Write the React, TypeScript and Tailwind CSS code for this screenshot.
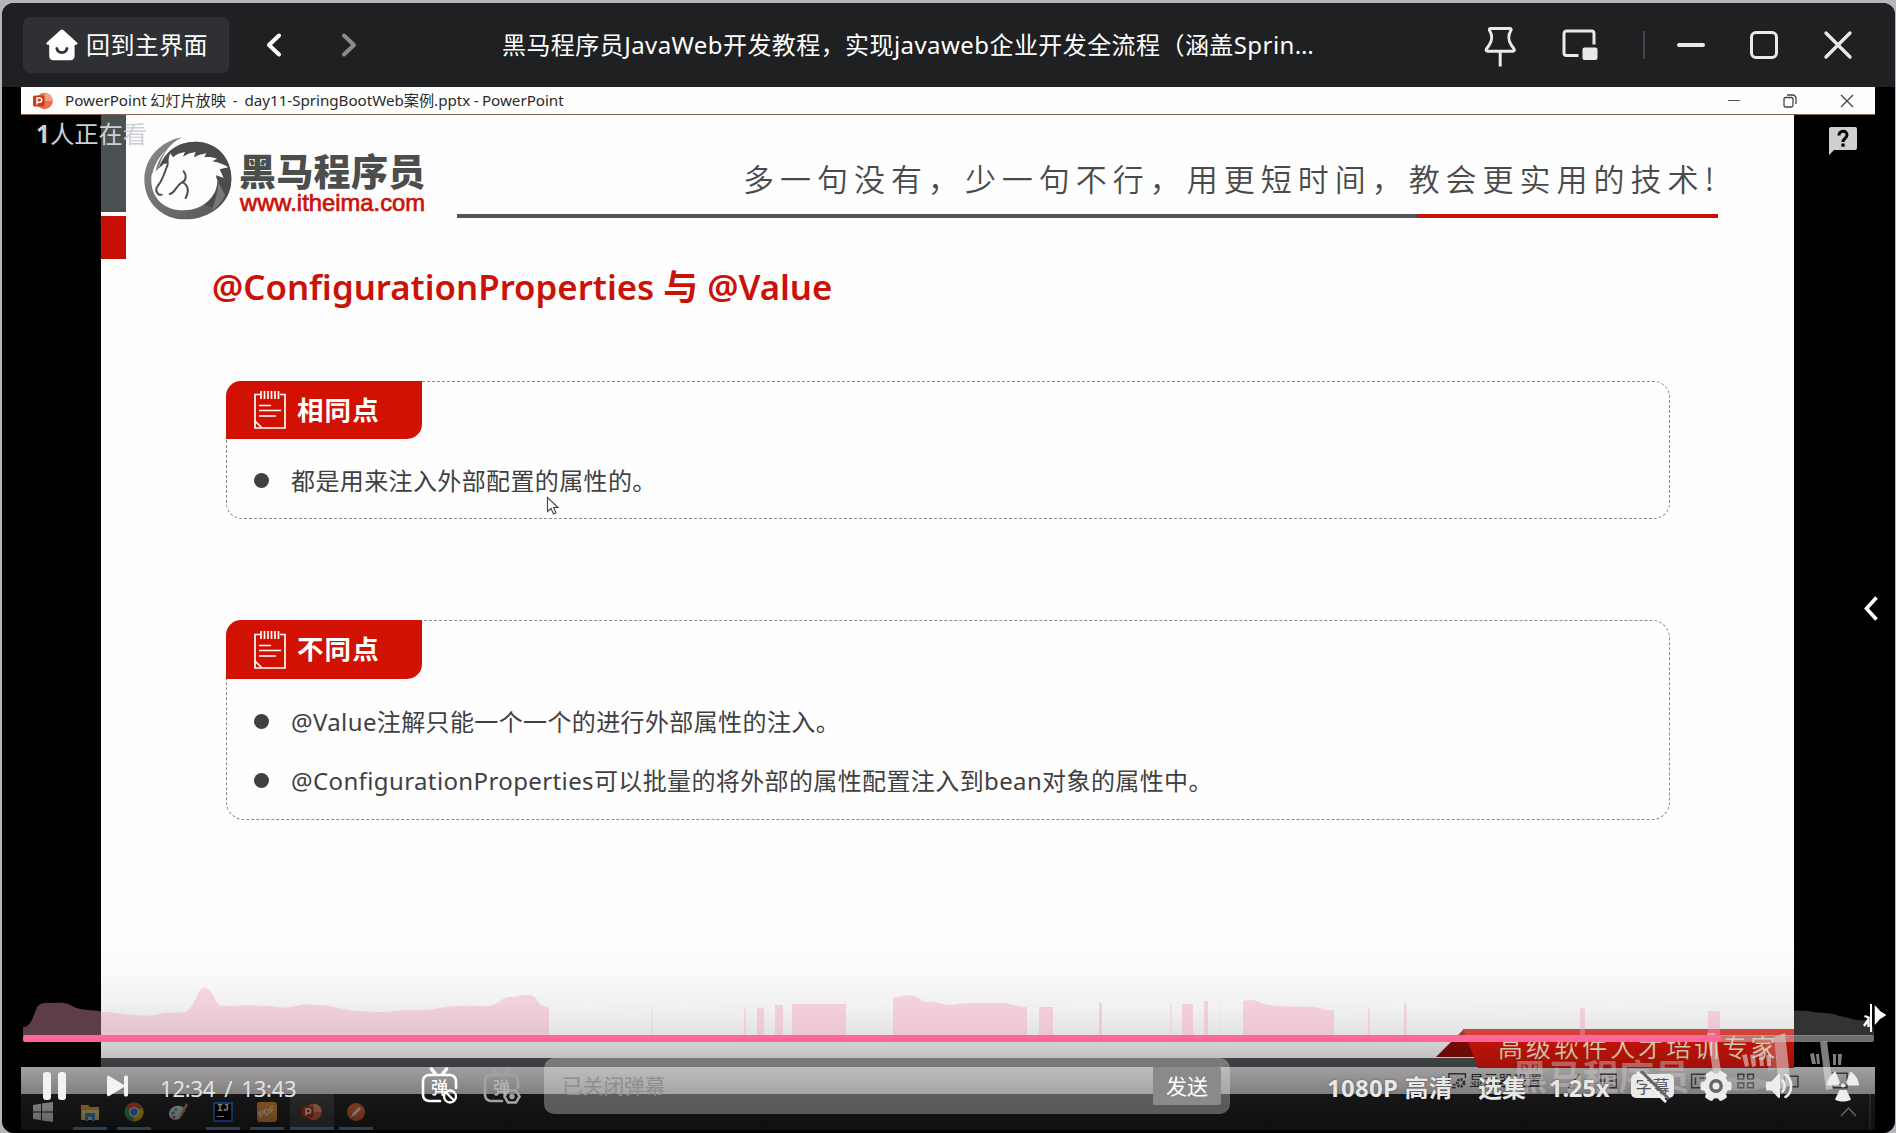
import React from "react";

const cjk = "font-['Noto_Sans','Noto_Sans_CJK_SC',sans-serif]";

/* ---------- window title bar ---------- */

function TitleBar() {
  return (
    <header className="flex h-[84px] shrink-0 items-center bg-[#1f2022] text-white">
      <button className="ml-[21px] flex h-[56px] w-[206px] items-center rounded-[7px] bg-[#2f3034] pl-[22px]">
        <svg width="34" height="34" viewBox="0 0 34 34">
          <path
            d="M15 2.6a2.6 2.6 0 0 1 3.8 0L32 14.6c.9.9.4 2.2-.8 2.2H29.6V28c0 2.6-1.6 4.2-4.2 4.2H8.4C5.800 32.200 4.200 30.600 4.200 28V16.800H2.600c-1.200 0-1.700-1.300-.8-2.200z"
            fill="#fff"
          />
          <path d="M11.800 20.500c1.200 5.400 9 5.400 10.200 0" fill="none" stroke="#2f3034" strokeWidth="2.800" strokeLinecap="round" />
        </svg>
        <span className="ml-[7px] text-[24px] leading-none tracking-[0.4px] whitespace-nowrap">回到主界面</span>
      </button>
      <svg className="ml-[35px]" width="22" height="28" viewBox="0 0 22 28">
        <path d="M15 4.500L5 14l10 9.500" fill="none" stroke="#fff" strokeWidth="4" strokeLinecap="round" strokeLinejoin="round" />
      </svg>
      <svg className="ml-[54px]" width="22" height="28" viewBox="0 0 22 28">
        <path d="M4 4.500L14 14 4 23.500" fill="none" stroke="#8a8b8d" strokeWidth="4" strokeLinecap="round" strokeLinejoin="round" />
      </svg>
      <h1 className="ml-[140px] w-[841px] text-[24px] leading-none tracking-[0.430px] whitespace-nowrap">
        黑马程序员JavaWeb开发教程，实现javaweb企业开发全流程（涵盖Sprin…
      </h1>
      <div className="ml-[140px] flex items-center" aria-label="window controls">
        <svg width="34" height="44" viewBox="0 0 34 44" fill="none" stroke="#e9e9eb" strokeWidth="3" strokeLinejoin="round">
          <path d="M7.500 5.500h19.500c1 0 1.500 1 1 1.800-2.800 4.500-3 10.500.5 15l2.500 3.600c.8 1.300.2 2.300-1.200 2.300H4.700c-1.400 0-2-1-1.200-2.300l2.500-3.600c3.500-4.500 3.300-10.500.5-15-.5-.8 0-1.800 1-1.800z" />
          <path d="M17.200 28v15.500" />
        </svg>
        <svg className="ml-[44px]" width="38" height="34" viewBox="0 0 38 34">
          <path d="M17.500 27.500H5.500a2.500 2.500 0 0 1-2.500-2.500V5.500a2.500 2.500 0 0 1 2.500-2.500h25a2.500 2.500 0 0 1 2.500 2.500V16.500" fill="none" stroke="#e9e9eb" strokeWidth="3" />
          <rect x="21.500" y="19.500" width="15" height="12.500" rx="2" fill="#e9e9eb" />
        </svg>
        <div className="ml-[44px] h-[28px] w-[2px] bg-[#45464a]" />
        <div className="ml-[32px] h-[4px] w-[28px] rounded-full bg-[#e9e9eb]" />
        <div className="ml-[45px] h-[28px] w-[28px] rounded-[6px] border-[3px] border-[#e9e9eb]" />
        <svg className="ml-[45px]" width="30" height="30" viewBox="0 0 30 30">
          <path d="M3 3l24 24M27 3L3 27" stroke="#e9e9eb" strokeWidth="3.400" strokeLinecap="round" />
        </svg>
      </div>
    </header>
  );
}

/* ---------- recorded PowerPoint window ---------- */

function PptIcon({ className }: { className?: string }) {
  return (
    <svg className={className} width="20" height="18" viewBox="0 0 20 18">
      <circle cx="11.500" cy="9" r="8.300" fill="#e8704c" />
      <path d="M11.500.7a8.300 8.300 0 0 1 8.300 8.300h-8.300z" fill="#f4a084" />
      <rect x="0" y="3.500" width="11.500" height="11" rx="1.500" fill="#c43e1c" />
      <path d="M4 12.500V6h2.600a2 2 0 0 1 0 4.200H4" fill="none" stroke="#fff" strokeWidth="1.500" />
    </svg>
  );
}

function PptTitleBar() {
  return (
    <div className="mr-[20px] ml-[19px] flex h-[28px] shrink-0 items-center border-b border-[#8b5e52] bg-[#fefefd] text-[#2b2b2b]">
      <PptIcon className="ml-[12px]" />
      <span className="ml-[12px] w-[510px] text-[15.200px] leading-none tracking-[-0.030px] [word-spacing:-0.500px] whitespace-pre">
        PowerPoint 幻灯片放映  -  day11-SpringBootWeb案例.pptx - PowerPoint
      </span>
      <div className="mr-[21px] ml-auto flex items-center">
        <div className="h-[1.500px] w-[12px] bg-[#555]" />
        <svg className="ml-[43px]" width="14" height="14" viewBox="0 0 14 14" fill="none" stroke="#444" strokeWidth="1.300">
          <rect x="1" y="3.500" width="9" height="9.500" rx="1.500" />
          <path d="M4 1h5.500A3.500 3.500 0 0 1 13 4.500V10" />
        </svg>
        <svg className="ml-[43px]" width="14" height="14" viewBox="0 0 14 14" stroke="#444" strokeWidth="1.300">
          <path d="M1 1l12 12M13 1L1 13" />
        </svg>
      </div>
    </div>
  );
}

function HorseLogo() {
  return (
    <svg width="90" height="86" viewBox="24 34 270 258">
      <defs>
        <linearGradient id="ring" x1="0" y1="0" x2="1" y2="1">
          <stop offset="0" stopColor="#8b8d8d" />
          <stop offset="0.500" stopColor="#6e7070" />
          <stop offset="1" stopColor="#525454" />
        </linearGradient>
      </defs>
      <path
        d="M142 38C80 48 28 98 28 165c0 68 52 119 122 119 78 0 139-52 139-122 0-62-44-111-107-111-64 0-106 42-114 98 6-40 24-88 74-111z"
        fill="url(#ring)"
      />
      <path d="M182 51c-56 0-96 34-111 82l-6 64 180 55c28-23 44-52 44-90 0-62-44-111-107-111z" fill="#4b4d4d" />
      <path d="M50 150c-8 62 30 107 96 107 56 0 102-40 101-90l-20-50-140 0z" fill="#fdfdfd" />
      <path d="M60 172c-2-38 12-76 36-96-18 10-42 46-46 84z" fill="#fdfdfd" />
      <path
        d="M102 122c-2-14-2-24 4-36l8 12c10-10 22-14 36-16l-6 14c12-8 24-12 38-14l-6 16c12-6 24-10 38-12l-6 12c14-2 26 0 38 4l-14 8c20 4 36 10 48 18l-26 6 12 26-22-8c-2 50-30 84-74 90-55 8-96-10-104-44l14-2-14-22c6-14 18-34 20-52-8 8-18 26-22 40 8-28 20-40 36-40z"
        fill="#fdfdfd"
      />
      <path d="M98 120c-10 24-14 46-30 64-6 8-6 18 4 26l8 0M104 208c16-2 18-24 36-34 14-6 16-22 6-34M142 172c18 10 20 28 10 48" fill="none" stroke="#4b4d4d" strokeWidth="6" strokeLinecap="round" strokeLinejoin="round" />
      <path d="M232 256c8-30 18-56 18-84l20 40c-8 18-20 34-38 44z" fill="#777979" />
    </svg>
  );
}

function SlideHeader() {
  return (
    <div className="flex h-[145px] shrink-0">
      <div className="flex w-[25px] shrink-0 flex-col gap-[4px]">
        <div className="h-[97px] bg-[#4b5152]" />
        <div className="h-[43px] bg-[#c61005]" />
      </div>
      <div className="mt-[21px] ml-[17px] h-[86px] w-[90px] shrink-0">
        <HorseLogo />
      </div>
      <div className="mt-[36px] ml-[6px] w-[190px] shrink-0">
        <div className="font-['Noto_Sans_CJK_SC',sans-serif] text-[37px] leading-[38px] font-black tracking-[0.300px] whitespace-nowrap text-[#4c4e4e]">黑马程序员</div>
        <div className="mt-[2px] ml-[1px] font-['Liberation_Sans',sans-serif] text-[23.800px] leading-[24px] font-normal tracking-[0px] whitespace-nowrap text-[#cb1208] [-webkit-text-stroke:0.700px_#cb1208]">
          www.itheima.com
        </div>
      </div>
      <div className="ml-[28px] flex w-[1261px] flex-col">
        <div className="mt-[44px] ml-[286px] h-[38px] font-['Noto_Sans_CJK_SC',sans-serif] text-[31px] leading-[38px] font-[350] tracking-[5.980px] whitespace-nowrap text-[#4a4a4a]">
          多一句没有，少一句不行，用更短时间，教会更实用的技术!
        </div>
        <div className="mt-[17px] flex h-[4px]">
          <div className="w-[960px] bg-[#535556]" />
          <div className="grow bg-[#cb1208]" />
        </div>
      </div>
    </div>
  );
}

function NoteIcon() {
  return (
    <svg width="32" height="40" viewBox="0 0 32 40" fill="none" stroke="#fff" strokeWidth="1.700">
      <path d="M6 4.500H1V38h30V4.500h-5" />
      <path d="M7 1v8M10.500 1v8M14 1v8M17.500 1v8M21 1v8M24.500 1v8" />
      <path d="M5 15.500h12M5 20.500h22M5 26h17M1 31l7 7" />
    </svg>
  );
}

function Card({ title, lines, first }: { title: string; lines: string[]; first?: boolean }) {
  return (
    <section
      className={
        first
          ? "ml-[125px] h-[138px] w-[1444px] rounded-[16px] border border-dashed border-[#8c8c8c]"
          : "mt-[101px] ml-[125px] h-[200px] w-[1444px] rounded-[18px] border border-dashed border-[#8c8c8c]"
      }
    >
      <div
        className={
          first
            ? "-mt-px -ml-px flex h-[58px] w-[196px] items-center rounded-tl-[15px] rounded-br-[15px] bg-[#d11102] pl-[28px]"
            : "-mt-px -ml-px flex h-[59px] w-[196px] items-center rounded-tl-[15px] rounded-br-[15px] bg-[#d11102] pl-[28px]"
        }
      >
        <NoteIcon />
        <span className="-mt-[2px] ml-[11px] font-['Noto_Sans_CJK_SC',sans-serif] text-[26.500px] leading-none font-bold tracking-[1.100px] whitespace-nowrap text-white">{title}</span>
      </div>
      <ul className={first ? "mt-[12px]" : "mt-[13px]"}>
        {lines.map((line) => (
          <li key={line} className="flex h-[59px] items-center text-[24px] leading-none tracking-[0.380px] whitespace-nowrap text-[#404040]">
            <span className="mr-[22px] ml-[27px] h-[15px] w-[15px] rounded-full bg-[#404040]" />
            {line}
          </li>
        ))}
      </ul>
    </section>
  );
}

function Slide() {
  return (
    <div className="ml-[99px] flex h-[943px] w-[1693px] shrink-0 flex-col bg-[#fefefe]">
      <SlideHeader />
      <h2 className="mt-[3px] ml-[111px] flex h-[48px] items-center font-['Noto_Sans','Noto_Sans_CJK_SC',sans-serif] text-[34.800px] leading-none font-semibold tracking-[0px] whitespace-nowrap text-[#cb1208]">
        @ConfigurationProperties 与 @Value
      </h2>
      <div className="mt-[70px]">
        <Card first title="相同点" lines={["都是用来注入外部配置的属性的。"]} />
        <Card
          title="不同点"
          lines={["@Value注解只能一个一个的进行外部属性的注入。", "@ConfigurationProperties可以批量的将外部的属性配置注入到bean对象的属性中。"]}
        />
      </div>
    </div>
  );
}

function SlideBanner() {
  return (
    <div className="absolute top-[1025px] left-[1433px] h-[40px] w-[360px]">
      <svg className="absolute inset-0" width="360" height="40" viewBox="0 0 360 40">
        <path d="M1 29L29 1l12 28z" fill="#8d0c05" />
        <path d="M28 1h331v39H43z" fill="#e3170b" />
      </svg>
      <div className="absolute top-[4px] left-[63px] font-['Noto_Sans_CJK_SC',sans-serif] text-[25px] leading-[28px] font-[350] tracking-[3.050px] whitespace-nowrap text-[#fff7d8]">高级软件人才培训专家</div>
    </div>
  );
}

function Watermark() {
  return (
    <div className="absolute top-[1030px] left-[1510px] h-[62px] w-[340px]">
      <div className="absolute top-[23px] left-0 font-['Noto_Sans_CJK_SC',sans-serif] text-[35.500px] leading-[38px] font-bold whitespace-nowrap text-[#cfc9c9]/45">黑马程序员</div>
      <svg className="absolute inset-0" width="340" height="62" viewBox="0 0 340 62" fill="#e6e6e6" fillOpacity="0.550">
        <path d="M195 0l8-1 7 46-8 1zM230 22l5-1 2 12-4 1zM238 22l5-1 1 12-4 1zM247 22l4-1 1 12-4 0zM254 22l5-1 0 12-4 0zM262 4l11-4 6 54-12 2z" />
        <path d="M242 18l20-12 4 30-10 2 0-18-12 4z" fillOpacity="0.250" />
        <path d="M298 21l4-1 2 11-4 0zM304 21l3 0 1 10-3 0zM308 9l7-1 6 48-7 1zM321 21l3 0 0 11-3 0zM326 21l4 0-1 11-3 0z" />
        <path d="M192 50c20-8 60-8 70 2-20 8-56 8-70-2z" fillOpacity="0.200" />
      </svg>
    </div>
  );
}

function PresenterBar() {
  return (
    <div className="mr-[20px] ml-[19px] flex h-[27px] shrink-0 items-center bg-[#e4e0e1] text-[#333]">
      <svg className="ml-[1427px]" width="20" height="18" viewBox="0 0 20 18" fill="none" stroke="#444" strokeWidth="1.500">
        <path d="M8 13H1V1.500h17V6M4 16h4" />
        <circle cx="13" cy="11" r="3.500" strokeWidth="3" strokeDasharray="2 1.200" />
      </svg>
      <span className="ml-[2px] text-[14.500px] leading-none whitespace-nowrap">显示器设置</span>
      <svg className="ml-[24px]" width="320" height="18" viewBox="0 0 320 18" fill="none" stroke="#555" strokeWidth="1.500">
        <path d="M2 16L14 2M36 2h16v14H36zM40 5v8M44 5h5M44 9h5M44 13h5M130 2h15v14h-15zM134 5v8M138 6h5M178 2h6v5h-6zM188 2h6v5h-6zM178 11h6v5h-6zM188 11h6v5h-6zM226 4h14v11h-14zM276 1h15v15h-15z" />
      </svg>
    </div>
  );
}

function TaskItem({ children, active, running }: { children: React.ReactNode; active?: boolean; running?: boolean }) {
  return (
    <div className={active ? "flex h-full w-[44px] flex-col items-center bg-white/15" : "flex h-full w-[44px] flex-col items-center"}>
      <div className="flex h-[33px] w-full items-center justify-center pt-[3px]">{children}</div>
      <div className={running ? (active ? "h-[3px] w-[44px] bg-[#6aa7d8]" : "h-[3px] w-[34px] bg-[#6aa7d8]") : "h-[3px]"} />
    </div>
  );
}

function TaskBar() {
  return (
    <div className="mr-[20px] ml-[19px] flex h-[36px] shrink-0 bg-[#27282a]">
      <TaskItem>
        <svg width="20" height="20" viewBox="0 0 20 20" fill="#f2f2f2">
          <path d="M0 3l8-1.200V9.500H0zM9 1.600L20 0v9.500H9zM0 10.500h8v7.700L0 17zM9 10.500h11V20L9 18.400z" />
        </svg>
      </TaskItem>
      <div className="w-[3px]" />
      <TaskItem running>
        <svg width="18" height="17" viewBox="0 0 18 17">
          <path d="M0 1h7l2 2h9v13H0z" fill="#e8b73a" />
          <path d="M1 16V6h17v10z" fill="#ffe08a" />
          <path d="M4 17V9h10v8h-3v-4H7v4z" fill="#3c95e0" />
        </svg>
      </TaskItem>
      <TaskItem running>
        <svg width="20" height="20" viewBox="0 0 20 20">
          <circle cx="10" cy="10" r="9.500" fill="#35a853" />
          <path d="M10 10L1.800 5.200A9.500 9.500 0 0 1 18.500 5.800H10z" fill="#ea4335" />
          <path d="M10 10l8.500-4.200A9.500 9.500 0 0 1 9.500 19.500z" fill="#fbbc04" />
          <circle cx="10" cy="10" r="4.800" fill="#fff" />
          <circle cx="10" cy="10" r="3.700" fill="#3f7fe8" />
        </svg>
      </TaskItem>
      <TaskItem>
        <svg width="20" height="20" viewBox="0 0 20 20">
          <path d="M1 12c0-6 6-9 11-8 5 1 7 5 3 7-3 1-1 4-4 6-4 2-10 0-10-5z" fill="#d5e3ee" />
          <circle cx="5" cy="11" r="1.600" fill="#4a90d9" />
          <circle cx="8" cy="7.500" r="1.500" fill="#58b368" />
          <circle cx="6" cy="15" r="1.500" fill="#e15241" />
          <path d="M18 1l-6 12-1 4 3-3 6-11z" fill="#d08f5b" />
        </svg>
      </TaskItem>
      <div className="w-[1px]" />
      <TaskItem running>
        <div className="h-[20px] w-[20px] border-2 border-[#2a6fd6] bg-black pl-[2px] font-['Liberation_Mono',monospace] text-[10px] leading-[10px] font-bold text-white">
          IJ
          <div className="mt-[2px] h-[1px] w-[7px] bg-white" />
        </div>
      </TaskItem>
      <TaskItem running>
        <div className="flex h-[20px] w-[20px] items-center justify-center rounded-[3px] bg-[#f39a3d]">
          <span className="-rotate-[25deg] font-['Liberation_Sans',sans-serif] text-[9px] leading-none font-bold text-[#fff3d8]">PDF</span>
        </div>
      </TaskItem>
      <div className="w-[1px]" />
      <TaskItem active running>
        <PptIcon />
      </TaskItem>
      <TaskItem running>
        <svg width="18" height="18" viewBox="0 0 18 18">
          <circle cx="9" cy="9" r="9" fill="#f0703c" />
          <path d="M4 14l2-4 6-6 2 2-6 6z" fill="#fff" />
        </svg>
      </TaskItem>
      <svg className="mr-[1px] ml-auto" width="40" height="36" viewBox="0 0 40 36" fill="none" stroke="#cfcfcf" strokeWidth="1.500">
        <path d="M7 22l7.500-8 7.500 8" />
        <path d="M36 0v36" stroke="#777" strokeWidth="1" />
      </svg>
    </div>
  );
}

/* ---------- player overlay ---------- */

const heat =
  "M0 48V26C8 26 10 16 14 6C18 1 22 2 30 2C40 1 46 2 51 6C60 10 68 8 80 11C92 11 96 13 108 14C125 15 132 15 140 12C148 11 154 12 162 11C172 8 174-13 181-13C190-14 192 6 200 5C222 4 245 4 262 7C276 5 280 2 292 4C312 4 318 9 334 10C358 12 366 11 382 9H404C418 7 424 5 440 5C450 4 458 6 466 5C478 3 478-4 488-4C498-4 498-7 506-6C516-6 512 6 526 6V48Z";

const envelope =
  "M526 48V6C548 6 554 3 568 3C580 4 590 8 606 8C630 7 640 3 660 3C690 4 700 7 722 8C738 7 752 6 762 3C780 3 800 6 823 3C850 3 850-1 869-3C880-7 890-5 896 0C910 1 916 4 926 3C940 0 960 1 985 1C996 2 996 6 1010 6C1040 5 1060 1 1100 1C1140 1 1160 4 1182 0C1196 2 1220-1 1234-2C1244 3 1252 4 1276 5C1296 5 1300 9 1312 8C1340 8 1362 3 1385 2C1420 2 1440 6 1480 8C1530 8 1560 2 1597 3C1640 4 1660 10 1700 9C1740 12 1765 8 1785 10C1800 13 1808 11 1816 15C1830 17 1830 20 1842 19C1848 22 1851 26 1851 30V48Z";

const peaks: [number, number, number, number][] = [
  [628, 2, 6, 0.35],
  [721, 2, 8, 0.8],
  [734, 7, 7, 1],
  [752, 8, 4, 1],
  [769, 54, 3, 1],
  [1016, 14, 6, 1],
  [1076, 3, 2, 1],
  [1147, 1.5, 3, 0.7],
  [1159, 11, 3, 1],
  [1181, 4, 0, 1],
  [1197, 1, 0, 0.4],
  [1345, 1.5, 7, 0.9],
  [1381, 2.5, 2, 1],
  [1557, 5, 7, 1],
  [1685, 12, 10, 1],
];

function HeatCurve() {
  return (
    <svg className="ml-[21px] block shrink-0" width="1872" height="57" viewBox="0 0 1872 57" overflow="visible">
      <clipPath id="heatclip">
        <rect x="-2" y="-20" width="1860" height="55" />
      </clipPath>
      <g transform="translate(0 22)">
        <g clipPath="url(#heatclip)">
          <path d={heat} fill="rgb(240,157,190)" fillOpacity="0.390" />
          <path d={envelope} fill="#fff" fillOpacity="0.200" />
          {peaks.map(([x, w, y, o]) => (
            <rect key={x} x={x} y={y} width={w} height={40} fill="#f5a0c0" fillOpacity={0.42 * o} />
          ))}
          <path d="M870 36V-3C876-5 884-6 890-5C898-3 898 1 904 1C914 0 918 4 928 4C940 2 946 2 960 2H982C990 3 994 6 1004 6V36Z" fill="#f5a0c0" fillOpacity="0.420" />
          <path d="M1220 36V0C1228-2 1232-1 1236 1C1244 5 1256 5 1292 6C1302 8 1304 10 1311 9V36Z" fill="#f5a0c0" fillOpacity="0.420" />
        </g>
        <g stroke="#fff" fill="#fff">
          <path d="M1848 3v28" strokeWidth="2" />
          <path d="M1852.500 6v16l3.500-4 6-4-5-3z" strokeWidth="1.500" />
          <path d="M1841.500 15l4 1.500v9.500M1845 19l-4 6" strokeWidth="2.400" fill="none" />
        </g>
      </g>
    </svg>
  );
}

function DanmakuIcon({ variant }: { variant: "off" | "settings" }) {
  const off = variant === "off";
  const color = off ? "#ffffff" : "#a3a2a2";
  return (
    <div className="relative h-[38px] w-[38px]">
      <svg className="absolute inset-0" width="38" height="38" viewBox="0 0 38 38" fill="none" stroke={color} strokeWidth="2.600" strokeLinecap="round">
        <path d="M10.500 2l3.500 4.500M25.500 2L22 6.500" strokeWidth="3.600" />
        <path d="M19 34H8a6 6 0 0 1-6-6V14a6 6 0 0 1 6-6h21a6 6 0 0 1 6 6v7" />
        {off ? (
          <g strokeWidth="2.300">
            <circle cx="29" cy="29.500" r="6" />
            <path d="M25 25.500l8 8" />
          </g>
        ) : (
          <g strokeWidth="2.600">
            <path d="M25 23.500h8l3.500 6-3.500 6h-8l-3.500-6z" />
            <circle cx="29" cy="29.500" r="1.400" />
          </g>
        )}
      </svg>
      <span
        className={
          off
            ? "absolute top-[11px] left-[10px] font-['Noto_Sans_CJK_SC',sans-serif] text-[17px] leading-[18px] font-medium text-white"
            : "absolute top-[11px] left-[10px] font-['Noto_Sans_CJK_SC',sans-serif] text-[17px] leading-[18px] font-medium text-[#b5b4b4]"
        }
      >
        弹
      </span>
    </div>
  );
}

function Controls() {
  return (
    <div className="flex h-[56px] shrink-0 items-center text-[#e8e8e8]">
      <div className="ml-[41px] flex w-[23px] gap-[7px]">
        <div className="h-[28px] w-[8px] rounded-[3px] bg-[#f2f2f2]" />
        <div className="h-[28px] w-[8px] rounded-[3px] bg-[#f2f2f2]" />
      </div>
      <svg className="ml-[40px]" width="23" height="22" viewBox="0 0 23 22" fill="#f2f2f2">
        <path d="M1 2.500C1 .8 2.300.3 3.600 1.200L18 10v2L3.600 20.800C2.300 21.700 1 21.200 1 19.500z" />
        <rect x="18" y=".5" width="4" height="21" rx="1.500" />
      </svg>
      <span className="mt-[3px] ml-[31px] w-[261px] text-[22px] leading-none tracking-[-0.200px] [word-spacing:3.500px] whitespace-nowrap text-[#e2e2e2]">12:34 / 13:43</span>
      <DanmakuIcon variant="off" />
      <div className="w-[24px]" />
      <DanmakuIcon variant="settings" />
      <div className="ml-[23px] flex h-[56px] w-[686px] items-center rounded-[10px] bg-white/30 pl-[18px]">
        <span className="text-[20.700px] leading-none whitespace-nowrap text-[#8f8e8e]">已关闭弹幕</span>
        <div className="mr-[9px] ml-auto flex h-[38px] w-[68px] items-center justify-center rounded-r-[3px] bg-[#8a8a8a] text-[21px] leading-none text-white">发送</div>
      </div>
      <div className="mt-[4px] ml-[97px] flex items-center font-bold whitespace-nowrap [text-shadow:0_0_2px_rgba(0,0,0,0.500)]">
        <span className="w-[151px] text-[24px] leading-none tracking-[0.250px]">1080P 高清</span>
        <span className="w-[71px] text-[24px] leading-none">选集</span>
        <span className="w-[82px] text-[24px] leading-none tracking-[-0.300px]">1.25x</span>
      </div>
      <div className="relative h-[30px] w-[44px]">
        <div className="absolute top-[3px] left-0 flex h-[24px] w-[43px] items-center justify-center rounded-[5px] bg-[#e9e9e9] text-[17px] leading-none text-[#555]">字幕</div>
        <svg className="absolute inset-0" width="44" height="34" viewBox="0 0 44 34">
          <path d="M10 0l28 28" stroke="#666" strokeWidth="3" />
          <path d="M7 2l27 28" stroke="#efefef" strokeWidth="3.200" strokeLinecap="round" />
        </svg>
      </div>
      <svg className="ml-[24px]" width="34" height="32" viewBox="0 0 34 32">
        <g fill="#ececec">
          <circle cx="17" cy="16" r="12.500" />
          <rect x="12.500" y=".5" width="9" height="31" rx="2.500" transform="rotate(30 17 16)" />
          <rect x="12.500" y=".5" width="9" height="31" rx="2.500" transform="rotate(90 17 16)" />
          <rect x="12.500" y=".5" width="9" height="31" rx="2.500" transform="rotate(150 17 16)" />
        </g>
        <circle cx="17" cy="16" r="5.200" fill="none" stroke="#666" strokeWidth="3.400" />
      </svg>
      <svg className="ml-[32px]" width="30" height="28" viewBox="0 0 30 28">
        <path d="M1.500 9.500h5L13 2.500c.8-.8 2-.4 2 .8v21.400c0 1.200-1.200 1.600-2 .8L6.500 18.500h-5C.5 16 .5 12 1.500 9.500z" fill="#ededed" />
        <path d="M17.500 8.500c2.800 2.800 2.800 8.200 0 11M20.500 3c7.500 4 7.500 18 0 22" fill="none" stroke="#ededed" strokeWidth="2.600" strokeLinecap="round" />
      </svg>
      <svg className="ml-[31px]" width="34" height="32" viewBox="0 0 34 32" fill="#ededed">
        <path d="M1 15.500C1 9.500 5 4 9.500 1.500L14 12.500c-1 .8-1.500 1.800-1.500 3zM33 15.500C33 9.500 29 4 24.500 1.500L20 12.500c1 .8 1.500 1.800 1.500 3zM13.500 20h7l4.500 9.500c-4.500 2.800-11.500 2.800-16 0z" />
        <circle cx="17" cy="15.500" r="2" />
      </svg>
    </div>
  );
}

function PlayerOverlay() {
  return (
    <div className="absolute inset-x-0 bottom-0 flex h-[212px] flex-col">
      <div className="h-[58px] shrink-0" />
      <HeatCurve />
      <div className="-mt-[1px] flex h-[7px] shrink-0 px-[21px]">
        <div className="w-[1698px] rounded-l-[2px] bg-[#ff6699]" />
        <div className="w-[153px] rounded-r-[2px] bg-[#c8c8c8]/55" />
      </div>
      <div className="h-[16px] shrink-0" />
      <Controls />
    </div>
  );
}

export default function App() {
  return (
    <div className="h-[1133px] w-[1896px] overflow-hidden bg-[#b4b6ba] pt-[3px] pl-[2px]">
      <main className={`relative flex h-[1130px] w-[1893px] flex-col overflow-hidden rounded-[12px] bg-black ${cjk}`}>
        <TitleBar />
        <PptTitleBar />
        <Slide />
        <div className="ml-[99px] h-[9px] w-[1693px] shrink-0 bg-[#53575a]" />
        <PresenterBar />
        <TaskBar />
        <SlideBanner />
        <div className="absolute inset-x-0 bottom-0 h-[200px] bg-[linear-gradient(to_bottom,rgba(0,0,0,0)_0%,rgba(0,0,0,0.010)_18%,rgba(0,0,0,0.050)_35%,rgba(0,0,0,0.140)_52%,rgba(0,0,0,0.260)_64%,rgba(0,0,0,0.320)_70%,rgba(0,0,0,0.450)_82%,rgba(0,0,0,0.640)_100%)]" />
        <Watermark />

        <div className="absolute top-[116px] left-[34px] text-[24.300px] leading-[30px] whitespace-nowrap text-[#cdd0d4]">
          <b className="font-bold">1</b>人正在看
        </div>
        <svg className="absolute top-[123px] left-[1826px]" width="30" height="30" viewBox="0 0 30 30">
          <path d="M3 1h24a2 2 0 0 1 2 2v19a2 2 0 0 1-2 2H6l-5 5V3a2 2 0 0 1 2-2z" fill="#cfcfcf" />
          <path d="M11 9.500c0-5.500 8-5.500 8-.5 0 3.500-4 3.500-4 7" fill="none" stroke="#000" strokeWidth="3" />
          <rect x="13.400" y="17.500" width="3.300" height="3.200" fill="#000" />
        </svg>
        <svg className="absolute top-[592px] left-[1859px]" width="20" height="28" viewBox="0 0 20 28">
          <path d="M15.500 2.500L5.500 13.500l10 11" fill="none" stroke="#fff" strokeWidth="3.600" />
        </svg>
        <svg className="absolute top-[493px] left-[544px]" width="16" height="20" viewBox="0 0 16 20">
          <path d="M1.500 1.500v14l3.500-3 2.500 5.500 2.500-1.200L7.500 11.500H12z" fill="#fff" stroke="#444" strokeWidth="1.100" />
        </svg>
        <PlayerOverlay />
      </main>
    </div>
  );
}
